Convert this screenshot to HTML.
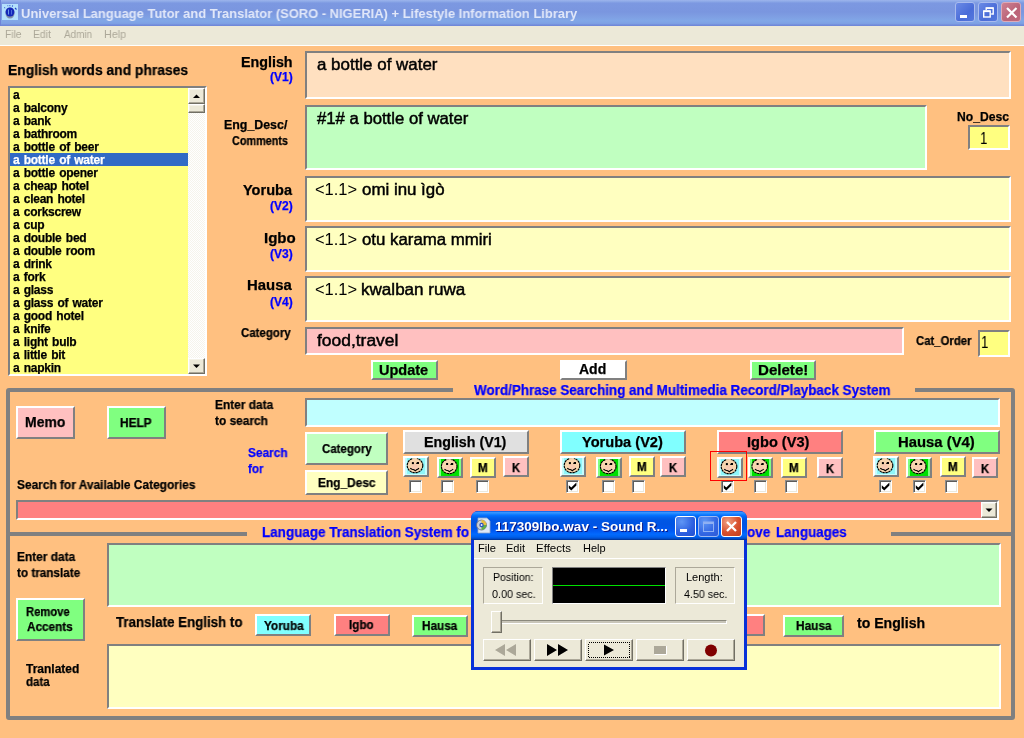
<!DOCTYPE html>
<html>
<head>
<meta charset="utf-8">
<title>Universal Language Tutor and Translator</title>
<style>html,body{margin:0;padding:0;}
body{width:1024px;height:738px;overflow:hidden;background:#FFC080;position:relative;font-family:"Liberation Sans",sans-serif;font-size:11px;color:#000;}
.abs{position:absolute;box-sizing:border-box;}
.tx{position:absolute;white-space:nowrap;font-weight:bold;transform-origin:0 0;will-change:transform;}
.sunk{position:absolute;box-sizing:border-box;border-top:2px solid #808080;border-left:2px solid #808080;border-bottom:2px solid #fff;border-right:2px solid #fff;overflow:hidden;}
.btn{position:absolute;box-sizing:border-box;border-top:2px solid #fff;border-left:2px solid #fff;border-bottom:2px solid #808080;border-right:2px solid #808080;overflow:hidden;}
#title{left:0;top:0;width:1024px;height:26px;background:linear-gradient(#9db4ec 0%,#8fabe8 5%,#7c98e1 12%,#7a96df 46%,#7f9fe3 65%,#81a7e7 80%,#7ea1e4 90%,#7590dc 95%,#6c84d6 100%);}
.tb{position:absolute;box-sizing:border-box;width:20px;height:20px;top:2px;border:1px solid #a9bbee;border-radius:3px;background:linear-gradient(135deg,#6a8ae6,#4a6cd8 60%,#5578dd);}
#menu{left:0;top:26px;width:1024px;height:20px;background:#ece9d8;border-bottom:1px solid #fff;}
#list{left:8px;top:86px;width:199px;height:290px;background:#FFFF80;}
#list .row{position:absolute;left:0;width:178px;height:13px;line-height:13px;font-size:12px;font-weight:bold;padding-left:3px;box-sizing:border-box;white-space:nowrap;letter-spacing:-0.25px;word-spacing:1.2px;}
#list .row span{position:relative;top:1px;will-change:transform;-webkit-text-stroke-width:0.25px;}
#list .sel{background:#316AC5;color:#fff;}
#sb{left:178px;top:0;width:17px;height:286px;background-color:#f6f4ec;background-image:linear-gradient(45deg,#fff 25%,transparent 25%,transparent 75%,#fff 75%),linear-gradient(45deg,#fff 25%,transparent 25%,transparent 75%,#fff 75%);background-size:2px 2px;background-position:0 0,1px 1px;}
.sbtn{position:absolute;box-sizing:border-box;left:0;width:17px;background:#ece9d8;border-top:1px solid #fff;border-left:1px solid #fff;border-bottom:1px solid #716f64;border-right:1px solid #716f64;box-shadow:inset -1px -1px 0 #aca899, inset 1px 1px 0 #f4f2e8;}
.frame{position:absolute;box-sizing:border-box;border:4px solid #808080;border-radius:3px;}
.cb{position:absolute;box-sizing:border-box;width:13px;height:13px;background:#fff;border-top:1px solid #8c8c8c;border-left:1px solid #8c8c8c;border-bottom:1px solid #fff;border-right:1px solid #fff;box-shadow:inset 1px 1px 0 #5c5c5c, inset -1px -1px 0 #ebe8dc;}
.cb svg{position:absolute;left:-1px;top:-1px;}
#sr{left:471px;top:511px;width:276px;height:159px;background:#0831d9;border-radius:7px 7px 0 0;overflow:hidden;}
#srt{left:0;top:0;width:276px;height:29px;border-radius:7px 7px 0 0;background:linear-gradient(#0058e6 0%,#3a93ff 5%,#288eff 8%,#127dff 12%,#036ffc 16%,#0262ee 22%,#0057e5 30%,#0054e3 45%,#0055eb 60%,#005bf5 70%,#026afe 80%,#0062ef 88%,#0052d6 94%,#0040ab 97%,#003092 100%);}
#srb{left:3px;top:29px;width:270px;height:127px;background:#ece9d8;}
.sb2{position:absolute;box-sizing:border-box;width:21px;height:21px;top:5px;border:1px solid #fff;border-radius:3px;}
.pan{position:absolute;box-sizing:border-box;border-top:1px solid #aca899;border-left:1px solid #aca899;border-bottom:1px solid #fff;border-right:1px solid #fff;}
.rb{position:absolute;box-sizing:border-box;top:99px;width:48px;height:22px;background:#ece9d8;border-top:1px solid #fff;border-left:1px solid #fff;border-bottom:1px solid #716f64;border-right:1px solid #716f64;box-shadow:inset -1px -1px 0 #aca899;}
.rb svg{position:absolute;left:0;top:0;}
</style>
</head>
<body>
<div id="title" class="abs"></div><div class="abs" style="left:0;top:0;width:1px;height:26px;background:#6e84d8"></div>
<svg class="abs" style="left:2px;top:4px" width="16" height="16" viewBox="0 0 16 16"><rect width="16" height="16" fill="#b4e0fc"/><ellipse cx="8" cy="9" rx="4.6" ry="5.6" fill="#7f8fa8"/><ellipse cx="8" cy="8" rx="4.4" ry="4.6" fill="#1428b8"/><rect x="6" y="5.5" width="1" height="5" fill="#6f9be8"/><rect x="9" y="6" width="1" height="4.5" fill="#4a6ad8"/><path d="M2.5 4 L3 3.5 M5.5 1.8 L6.2 1.8 M7.5 1.6 L8.3 1.6 M10 1.8 L11 2.2 M13 4 L14.5 5.5" stroke="#1c3fc8" stroke-width="1.1"/></svg>
<div class="tx" style="left:21.01px;top:5.50px;font-size:13px;line-height:16px;color:#e2e8f9;transform:scaleX(0.9946);">Universal Language Tutor and Translator (SORO - NIGERIA) + Lifestyle Information Library</div>
<div class="tb" style="left:955px"><svg width="18" height="18" viewBox="0 0 18 18"><rect x="4" y="12" width="7" height="3" fill="#fff"/></svg></div>
<div class="tb" style="left:978px"><svg width="18" height="18" viewBox="-0.7 -0.5 18 18"><path d="M6.5 6.5V4.5H13.5V10.5H11.5" fill="none" stroke="#fff" stroke-width="1.4"/><rect x="4" y="7.5" width="6.5" height="6" fill="none" stroke="#fff" stroke-width="1.4"/><rect x="4" y="7" width="6.5" height="1.6" fill="#fff"/><rect x="6.5" y="4" width="7" height="1.4" fill="#fff"/></svg></div>
<div class="tb" style="left:1001px;background:linear-gradient(135deg,#cd8293,#bb6378 60%,#c06a7e);border-color:#dcaab8"><svg width="18" height="18" viewBox="0 0 18 18"><path d="M5 5L14.5 14.5M14.5 5L5 14.5" stroke="#fff" stroke-width="2.2"/></svg></div>
<div id="menu" class="abs"></div>
<div class="tx" style="left:5.06px;top:27.69px;font-size:11px;line-height:13px;font-weight:normal;color:#aca899;transform:scaleX(0.9375);">File</div>
<div class="tx" style="left:32.56px;top:27.69px;font-size:11px;line-height:13px;font-weight:normal;color:#aca899;transform:scaleX(0.9444);">Edit</div>
<div class="tx" style="left:64.00px;top:27.69px;font-size:11px;line-height:13px;font-weight:normal;color:#aca899;transform:scaleX(0.9032);">Admin</div>
<div class="tx" style="left:103.52px;top:27.69px;font-size:11px;line-height:13px;font-weight:normal;color:#aca899;transform:scaleX(0.9762);">Help</div>
<div class="tx" style="left:8.01px;top:62.65px;font-size:14px;line-height:15px;-webkit-text-stroke-width:0.25px;transform:scaleX(0.9890);">English words and phrases</div>
<div id="list" class="sunk">
<div class="row" style="top:0px"><span>a</span></div>
<div class="row" style="top:13px"><span>a balcony</span></div>
<div class="row" style="top:26px"><span>a bank</span></div>
<div class="row" style="top:39px"><span>a bathroom</span></div>
<div class="row" style="top:52px"><span>a bottle of beer</span></div>
<div class="row sel" style="top:65px"><span>a bottle of water</span></div>
<div class="row" style="top:78px"><span>a bottle opener</span></div>
<div class="row" style="top:91px"><span>a cheap hotel</span></div>
<div class="row" style="top:104px"><span>a clean hotel</span></div>
<div class="row" style="top:117px"><span>a corkscrew</span></div>
<div class="row" style="top:130px"><span>a cup</span></div>
<div class="row" style="top:143px"><span>a double bed</span></div>
<div class="row" style="top:156px"><span>a double room</span></div>
<div class="row" style="top:169px"><span>a drink</span></div>
<div class="row" style="top:182px"><span>a fork</span></div>
<div class="row" style="top:195px"><span>a glass</span></div>
<div class="row" style="top:208px"><span>a glass of water</span></div>
<div class="row" style="top:221px"><span>a good hotel</span></div>
<div class="row" style="top:234px"><span>a knife</span></div>
<div class="row" style="top:247px"><span>a light bulb</span></div>
<div class="row" style="top:260px"><span>a little bit</span></div>
<div class="row" style="top:273px"><span>a napkin</span></div>
<div id="sb" class="abs"><div class="sbtn" style="top:0;height:16px"><svg width="15" height="14" viewBox="0 0 15 14" style="position:absolute;left:0;top:0"><path d="M4 9 L7.5 5.5 L11 9 Z" fill="#000"/></svg></div><div class="sbtn" style="top:16px;height:9px"></div><div class="sbtn" style="top:270px;height:16px"><svg width="15" height="14" viewBox="0 0 15 14" style="position:absolute;left:0;top:0"><path d="M4 5.5 L11 5.5 L7.5 9 Z" fill="#000"/></svg></div></div>
</div>
<div class="tx" style="left:241.48px;top:54.65px;font-size:14px;line-height:15px;-webkit-text-stroke-width:0.25px;transform:scaleX(1.0204);">English</div>
<div class="tx" style="left:270.00px;top:71.34px;font-size:12px;line-height:13px;-webkit-text-stroke-width:0.25px;color:#0000FF;transform:scaleX(1.0000);">(V1)</div>
<div class="tx" style="left:224.00px;top:119.34px;font-size:12px;line-height:13px;-webkit-text-stroke-width:0.25px;transform:scaleX(1.0323);">Eng_Desc/</div>
<div class="tx" style="left:232.00px;top:134.84px;font-size:12px;line-height:13px;-webkit-text-stroke-width:0.25px;transform:scaleX(0.9032);">Comments</div>
<div class="tx" style="left:243.20px;top:182.65px;font-size:14px;line-height:15px;-webkit-text-stroke-width:0.25px;transform:scaleX(1.0375);">Yoruba</div>
<div class="tx" style="left:270.00px;top:199.94px;font-size:12px;line-height:13px;-webkit-text-stroke-width:0.25px;color:#0000FF;transform:scaleX(1.0000);">(V2)</div>
<div class="tx" style="left:264.23px;top:230.65px;font-size:14px;line-height:15px;-webkit-text-stroke-width:0.25px;transform:scaleX(1.0750);">Igbo</div>
<div class="tx" style="left:270.00px;top:247.64px;font-size:12px;line-height:13px;-webkit-text-stroke-width:0.25px;color:#0000FF;transform:scaleX(1.0000);">(V3)</div>
<div class="tx" style="left:247.24px;top:278.05px;font-size:14px;line-height:15px;-webkit-text-stroke-width:0.25px;transform:scaleX(1.0643);">Hausa</div>
<div class="tx" style="left:270.00px;top:295.94px;font-size:12px;line-height:13px;-webkit-text-stroke-width:0.25px;color:#0000FF;transform:scaleX(1.0000);">(V4)</div>
<div class="tx" style="left:240.90px;top:327.34px;font-size:12px;line-height:13px;-webkit-text-stroke-width:0.25px;transform:scaleX(0.9558);">Category</div>
<div class="tx" style="left:956.70px;top:110.94px;font-size:12px;line-height:13px;-webkit-text-stroke-width:0.25px;transform:scaleX(1.0118);">No_Desc</div>
<div class="tx" style="left:915.75px;top:334.74px;font-size:12px;line-height:13px;-webkit-text-stroke-width:0.25px;transform:scaleX(0.9466);">Cat_Order</div>
<div class="sunk" style="left:305px;top:51px;width:706px;height:48px;background:#FFE0C0;"></div>
<div class="sunk" style="left:305px;top:105px;width:622px;height:65px;background:#C0FFC0;"></div>
<div class="sunk" style="left:968px;top:125px;width:42px;height:25px;background:#FFFF80;"></div>
<div class="sunk" style="left:305px;top:176px;width:706px;height:46px;background:#FFFFC0;"></div>
<div class="sunk" style="left:305px;top:226px;width:706px;height:46px;background:#FFFFC0;"></div>
<div class="sunk" style="left:305px;top:276px;width:706px;height:46px;background:#FFFFC0;"></div>
<div class="sunk" style="left:305px;top:327px;width:599px;height:28px;background:#FFC0C0;"></div>
<div class="sunk" style="left:978px;top:330px;width:32px;height:27px;background:#FFFF80;"></div>
<div class="tx" style="left:317.20px;top:55.96px;font-size:16px;line-height:18px;font-weight:normal;transform:scaleX(1.0579);-webkit-text-stroke:0.45px #000;">a bottle of water</div>
<div class="tx" style="left:317.20px;top:109.96px;font-size:16px;line-height:18px;font-weight:normal;transform:scaleX(1.0434);-webkit-text-stroke:0.45px #000;">#1# a bottle of water</div>
<div class="tx" style="left:980.37px;top:130.16px;font-size:16px;line-height:18px;font-weight:normal;transform:scaleX(0.8286);">1</div>
<div class="tx" style="left:315.17px;top:181.16px;font-size:16px;line-height:18px;font-weight:normal;transform:scaleX(1.0282);">&lt;1.1&gt;</div>
<div class="tx" style="left:362.00px;top:181.16px;font-size:16px;line-height:18px;font-weight:normal;transform:scaleX(1.0551);-webkit-text-stroke:0.45px #000;">omi inu &igrave;g&ograve;</div>
<div class="tx" style="left:315.17px;top:231.06px;font-size:16px;line-height:18px;font-weight:normal;transform:scaleX(1.0282);">&lt;1.1&gt;</div>
<div class="tx" style="left:362.00px;top:231.06px;font-size:16px;line-height:18px;font-weight:normal;transform:scaleX(1.0504);-webkit-text-stroke:0.45px #000;">otu karama mmiri</div>
<div class="tx" style="left:315.17px;top:280.96px;font-size:16px;line-height:18px;font-weight:normal;transform:scaleX(1.0282);">&lt;1.1&gt;</div>
<div class="tx" style="left:360.93px;top:280.96px;font-size:16px;line-height:18px;font-weight:normal;transform:scaleX(1.0663);-webkit-text-stroke:0.45px #000;">kwalban ruwa</div>
<div class="tx" style="left:316.80px;top:331.76px;font-size:16px;line-height:18px;font-weight:normal;transform:scaleX(1.0892);-webkit-text-stroke:0.45px #000;">food,travel</div>
<div class="tx" style="left:981.37px;top:333.76px;font-size:16px;line-height:18px;font-weight:normal;transform:scaleX(0.8286);">1</div>
<div class="btn" style="left:371px;top:360px;width:67px;height:20px;background:#80FF80;"></div>
<div class="tx" style="left:378.90px;top:362.65px;font-size:14px;line-height:15px;-webkit-text-stroke-width:0.25px;transform:scaleX(1.0354);">Update</div>
<div class="btn" style="left:560px;top:360px;width:67px;height:20px;background:#FFFFFF;"></div>
<div class="tx" style="left:579.00px;top:362.15px;font-size:14px;line-height:15px;-webkit-text-stroke-width:0.25px;transform:scaleX(1.0000);">Add</div>
<div class="btn" style="left:750px;top:360px;width:66px;height:20px;background:#80FF80;"></div>
<div class="tx" style="left:758.42px;top:362.65px;font-size:14px;line-height:15px;-webkit-text-stroke-width:0.25px;transform:scaleX(1.0778);">Delete!</div>
<div class="frame" style="left:6px;top:388px;width:1009px;height:148px;"></div>
<div class="frame" style="left:6px;top:532px;width:1009px;height:188px;"></div>
<div class="abs" style="left:453px;top:386px;width:462px;height:8px;background:#FFC080"></div>
<div class="tx" style="left:473.50px;top:382.65px;font-size:14px;line-height:15px;-webkit-text-stroke-width:0.25px;color:#0000FF;transform:scaleX(0.9597);">Word/Phrase Searching and Multimedia Record/Playback System</div>
<div class="abs" style="left:247px;top:530px;width:644px;height:8px;background:#FFC080"></div>
<div class="tx" style="left:262.44px;top:524.85px;font-size:14px;line-height:15px;-webkit-text-stroke-width:0.25px;color:#0000FF;transform:scaleX(0.9607);">Language Translation System fo</div>
<div class="tx" style="left:739.05px;top:524.85px;font-size:14px;line-height:15px;-webkit-text-stroke-width:0.25px;color:#0000FF;transform:scaleX(0.9531);">bove</div>
<div class="tx" style="left:775.74px;top:524.85px;font-size:14px;line-height:15px;-webkit-text-stroke-width:0.25px;color:#0000FF;transform:scaleX(0.9575);">Languages</div>
<div class="btn" style="left:16px;top:406px;width:59px;height:33px;background:#FFC0C0;"></div>
<div class="tx" style="left:24.61px;top:414.65px;font-size:14px;line-height:15px;-webkit-text-stroke-width:0.25px;transform:scaleX(0.9949);">Memo</div>
<div class="btn" style="left:107px;top:406px;width:59px;height:33px;background:#80FF80;"></div>
<div class="tx" style="left:120.00px;top:416.84px;font-size:12px;line-height:13px;-webkit-text-stroke-width:0.25px;transform:scaleX(0.9844);">HELP</div>
<div class="tx" style="left:214.50px;top:399.34px;font-size:12px;line-height:13px;-webkit-text-stroke-width:0.25px;transform:scaleX(0.9915);">Enter data</div>
<div class="tx" style="left:214.50px;top:415.09px;font-size:12px;line-height:13px;-webkit-text-stroke-width:0.25px;transform:scaleX(0.9906);">to search</div>
<div class="sunk" style="left:305px;top:398px;width:695px;height:29px;background:#C0FFFF;"></div>
<div class="tx" style="left:247.50px;top:446.84px;font-size:12px;line-height:13px;-webkit-text-stroke-width:0.25px;color:#0000FF;transform:scaleX(0.9875);">Search</div>
<div class="tx" style="left:247.50px;top:463.09px;font-size:12px;line-height:13px;-webkit-text-stroke-width:0.25px;color:#0000FF;transform:scaleX(0.9688);">for</div>
<div class="btn" style="left:305px;top:432px;width:83px;height:33px;background:#C0FFC0;"></div>
<div class="tx" style="left:321.75px;top:443.09px;font-size:12px;line-height:13px;-webkit-text-stroke-width:0.25px;transform:scaleX(0.9567);">Category</div>
<div class="btn" style="left:305px;top:470px;width:83px;height:25px;background:#FFFFC0;"></div>
<div class="tx" style="left:317.50px;top:476.84px;font-size:12px;line-height:13px;-webkit-text-stroke-width:0.25px;transform:scaleX(0.9914);">Eng_Desc</div>
<div class="tx" style="left:16.50px;top:479.09px;font-size:12px;line-height:13px;-webkit-text-stroke-width:0.25px;transform:scaleX(0.9917);">Search for Available Categories</div>
<div class="sunk" style="left:16px;top:500px;width:983px;height:20px;background:#FF8080;"><div class="sbtn" style="left:963px;top:0;width:16px;height:16px"><svg width="14" height="14" viewBox="0 0 14 14" style="position:absolute;left:0;top:0"><path d="M3.5 5.5 L10.5 5.5 L7 9 Z" fill="#000"/></svg></div></div>
<div class="btn" style="left:403px;top:430px;width:126px;height:24px;background:#E0E0E0;"></div>
<div class="tx" style="left:423.58px;top:434.65px;font-size:14px;line-height:15px;-webkit-text-stroke-width:0.25px;transform:scaleX(1.0175);">English (V1)</div>
<div class="btn" style="left:403px;top:456px;width:26px;height:21px;background:#c6fdfd;"><svg width="22" height="17" style="position:absolute;left:0;top:0"><rect x="2" y="0" width="18" height="16" fill="#8ef6fa"/><g transform="translate(10.0,7.5)"><ellipse cx="0" cy="0" rx="7.8" ry="7.3" fill="#f8d6ae" stroke="#000" stroke-width="1.15" stroke-dasharray="2.4 0.6"/><rect x="-2.6" y="-8.2" width="5" height="1.6" fill="#f6e0c0"/><ellipse cx="0" cy="1.5" rx="3.6" ry="3" fill="#f8c4b4" opacity="0.6"/><rect x="-3.1" y="-3.4" width="2" height="2" fill="#000"/><path d="M1 -1.5 L2 -3.4 L4 -3.4 L4 -1.5 Z" fill="#000"/><path d="M-4.8 2.7 L-3 3.8 L-1 4.3 L0.3 5.3 L1.5 4.3 L3 3.5 L4 2.7" fill="none" stroke="#000" stroke-width="1.1"/></g></svg></div>
<div class="btn" style="left:437px;top:457px;width:26px;height:21px;background:#80FF80;"><svg width="22" height="17" style="position:absolute;left:0;top:0"><rect x="2" y="0" width="18" height="17" fill="#00E000"/><g transform="translate(10.2,7.4)"><ellipse cx="0" cy="0" rx="7.8" ry="7.3" fill="#f8d6ae" stroke="#000" stroke-width="1.15" stroke-dasharray="2.4 0.6"/><rect x="-2.6" y="-8.2" width="5" height="1.6" fill="#f6e0c0"/><ellipse cx="0" cy="1.5" rx="3.6" ry="3" fill="#f8c4b4" opacity="0.6"/><rect x="-3.1" y="-3.4" width="2" height="2" fill="#000"/><path d="M1 -1.5 L2 -3.4 L4 -3.4 L4 -1.5 Z" fill="#000"/><path d="M-4.8 2.7 L-3 3.8 L-1 4.3 L0.3 5.3 L1.5 4.3 L3 3.5 L4 2.7" fill="none" stroke="#000" stroke-width="1.1"/></g></svg></div>
<div class="btn" style="left:470px;top:457px;width:26px;height:21px;background:#FFFF80;"></div>
<div class="tx" style="left:478.00px;top:461.64px;font-size:12px;line-height:13px;-webkit-text-stroke-width:0.25px;transform:scaleX(0.9600);">M</div>
<div class="btn" style="left:503px;top:456px;width:26px;height:21px;background:#FFC0C0;"></div>
<div class="tx" style="left:512.00px;top:461.64px;font-size:12px;line-height:13px;-webkit-text-stroke-width:0.25px;transform:scaleX(0.9333);">K</div>
<div class="cb" style="left:409px;top:480px"></div>
<div class="cb" style="left:441px;top:480px"></div>
<div class="cb" style="left:476px;top:480px"></div>
<div class="btn" style="left:560px;top:430px;width:126px;height:24px;background:#80FFFF;"></div>
<div class="tx" style="left:581.70px;top:434.65px;font-size:14px;line-height:15px;-webkit-text-stroke-width:0.25px;transform:scaleX(1.0429);">Yoruba (V2)</div>
<div class="btn" style="left:560px;top:456px;width:26px;height:21px;background:#c6fdfd;"><svg width="22" height="17" style="position:absolute;left:0;top:0"><rect x="2" y="0" width="18" height="16" fill="#8ef6fa"/><g transform="translate(10.0,7.5)"><ellipse cx="0" cy="0" rx="7.8" ry="7.3" fill="#f8d6ae" stroke="#000" stroke-width="1.15" stroke-dasharray="2.4 0.6"/><rect x="-2.6" y="-8.2" width="5" height="1.6" fill="#f6e0c0"/><ellipse cx="0" cy="1.5" rx="3.6" ry="3" fill="#f8c4b4" opacity="0.6"/><rect x="-3.1" y="-3.4" width="2" height="2" fill="#000"/><path d="M1 -1.5 L2 -3.4 L4 -3.4 L4 -1.5 Z" fill="#000"/><path d="M-4.8 2.7 L-3 3.8 L-1 4.3 L0.3 5.3 L1.5 4.3 L3 3.5 L4 2.7" fill="none" stroke="#000" stroke-width="1.1"/></g></svg></div>
<div class="btn" style="left:596px;top:457px;width:26px;height:21px;background:#80FF80;"><svg width="22" height="17" style="position:absolute;left:0;top:0"><rect x="2" y="0" width="18" height="17" fill="#00E000"/><g transform="translate(10.2,7.4)"><ellipse cx="0" cy="0" rx="7.8" ry="7.3" fill="#f8d6ae" stroke="#000" stroke-width="1.15" stroke-dasharray="2.4 0.6"/><rect x="-2.6" y="-8.2" width="5" height="1.6" fill="#f6e0c0"/><ellipse cx="0" cy="1.5" rx="3.6" ry="3" fill="#f8c4b4" opacity="0.6"/><rect x="-3.1" y="-3.4" width="2" height="2" fill="#000"/><path d="M1 -1.5 L2 -3.4 L4 -3.4 L4 -1.5 Z" fill="#000"/><path d="M-4.8 2.7 L-3 3.8 L-1 4.3 L0.3 5.3 L1.5 4.3 L3 3.5 L4 2.7" fill="none" stroke="#000" stroke-width="1.1"/></g></svg></div>
<div class="btn" style="left:629px;top:456px;width:26px;height:21px;background:#FFFF80;"></div>
<div class="tx" style="left:637.00px;top:460.64px;font-size:12px;line-height:13px;-webkit-text-stroke-width:0.25px;transform:scaleX(0.9600);">M</div>
<div class="btn" style="left:660px;top:456px;width:26px;height:21px;background:#FFC0C0;"></div>
<div class="tx" style="left:669.00px;top:461.64px;font-size:12px;line-height:13px;-webkit-text-stroke-width:0.25px;transform:scaleX(0.9333);">K</div>
<div class="cb" style="left:566px;top:480px"><svg width="13" height="13" viewBox="0 0 13 13"><path d="M2.8 5.2 L5.3 7.6 L10.4 2.6 L10.4 5.6 L5.3 10.5 L2.8 8.2 Z" fill="#000"/></svg></div>
<div class="cb" style="left:602px;top:480px"></div>
<div class="cb" style="left:632px;top:480px"></div>
<div class="btn" style="left:717px;top:430px;width:126px;height:24px;background:#FF8080;"></div>
<div class="tx" style="left:747.46px;top:434.65px;font-size:14px;line-height:15px;-webkit-text-stroke-width:0.25px;transform:scaleX(1.0424);">Igbo (V3)</div>
<div class="btn" style="left:717px;top:457px;width:26px;height:21px;background:#c6fdfd;"><svg width="22" height="17" style="position:absolute;left:0;top:0"><rect x="2" y="0" width="18" height="16" fill="#8ef6fa"/><g transform="translate(10.0,7.5)"><ellipse cx="0" cy="0" rx="7.8" ry="7.3" fill="#f8d6ae" stroke="#000" stroke-width="1.15" stroke-dasharray="2.4 0.6"/><rect x="-2.6" y="-8.2" width="5" height="1.6" fill="#f6e0c0"/><ellipse cx="0" cy="1.5" rx="3.6" ry="3" fill="#f8c4b4" opacity="0.6"/><rect x="-3.1" y="-3.4" width="2" height="2" fill="#000"/><path d="M1 -1.5 L2 -3.4 L4 -3.4 L4 -1.5 Z" fill="#000"/><path d="M-4.8 2.7 L-3 3.8 L-1 4.3 L0.3 5.3 L1.5 4.3 L3 3.5 L4 2.7" fill="none" stroke="#000" stroke-width="1.1"/></g></svg></div>
<div class="btn" style="left:748px;top:457px;width:25px;height:21px;background:#80FF80;"><svg width="21" height="17" style="position:absolute;left:0;top:0"><rect x="2" y="0" width="17" height="17" fill="#00E000"/><g transform="translate(9.7,7.4)"><ellipse cx="0" cy="0" rx="7.8" ry="7.3" fill="#f8d6ae" stroke="#000" stroke-width="1.15" stroke-dasharray="2.4 0.6"/><rect x="-2.6" y="-8.2" width="5" height="1.6" fill="#f6e0c0"/><ellipse cx="0" cy="1.5" rx="3.6" ry="3" fill="#f8c4b4" opacity="0.6"/><rect x="-3.1" y="-3.4" width="2" height="2" fill="#000"/><path d="M1 -1.5 L2 -3.4 L4 -3.4 L4 -1.5 Z" fill="#000"/><path d="M-4.8 2.7 L-3 3.8 L-1 4.3 L0.3 5.3 L1.5 4.3 L3 3.5 L4 2.7" fill="none" stroke="#000" stroke-width="1.1"/></g></svg></div>
<div class="btn" style="left:781px;top:457px;width:26px;height:21px;background:#FFFF80;"></div>
<div class="tx" style="left:789.00px;top:461.64px;font-size:12px;line-height:13px;-webkit-text-stroke-width:0.25px;transform:scaleX(0.9600);">M</div>
<div class="btn" style="left:817px;top:457px;width:26px;height:21px;background:#FFC0C0;"></div>
<div class="tx" style="left:826.00px;top:462.64px;font-size:12px;line-height:13px;-webkit-text-stroke-width:0.25px;transform:scaleX(0.9333);">K</div>
<div class="cb" style="left:721px;top:480px"><svg width="13" height="13" viewBox="0 0 13 13"><path d="M2.8 5.2 L5.3 7.6 L10.4 2.6 L10.4 5.6 L5.3 10.5 L2.8 8.2 Z" fill="#000"/></svg></div>
<div class="cb" style="left:754px;top:480px"></div>
<div class="cb" style="left:785px;top:480px"></div>
<div class="btn" style="left:874px;top:430px;width:126px;height:24px;background:#80FF80;"></div>
<div class="tx" style="left:897.64px;top:434.65px;font-size:14px;line-height:15px;-webkit-text-stroke-width:0.25px;transform:scaleX(1.0606);">Hausa (V4)</div>
<div class="btn" style="left:873px;top:456px;width:26px;height:21px;background:#c6fdfd;"><svg width="22" height="17" style="position:absolute;left:0;top:0"><rect x="2" y="0" width="18" height="16" fill="#8ef6fa"/><g transform="translate(10.0,7.5)"><ellipse cx="0" cy="0" rx="7.8" ry="7.3" fill="#f8d6ae" stroke="#000" stroke-width="1.15" stroke-dasharray="2.4 0.6"/><rect x="-2.6" y="-8.2" width="5" height="1.6" fill="#f6e0c0"/><ellipse cx="0" cy="1.5" rx="3.6" ry="3" fill="#f8c4b4" opacity="0.6"/><rect x="-3.1" y="-3.4" width="2" height="2" fill="#000"/><path d="M1 -1.5 L2 -3.4 L4 -3.4 L4 -1.5 Z" fill="#000"/><path d="M-4.8 2.7 L-3 3.8 L-1 4.3 L0.3 5.3 L1.5 4.3 L3 3.5 L4 2.7" fill="none" stroke="#000" stroke-width="1.1"/></g></svg></div>
<div class="btn" style="left:906px;top:457px;width:26px;height:21px;background:#80FF80;"><svg width="22" height="17" style="position:absolute;left:0;top:0"><rect x="2" y="0" width="18" height="17" fill="#00E000"/><g transform="translate(10.2,7.4)"><ellipse cx="0" cy="0" rx="7.8" ry="7.3" fill="#f8d6ae" stroke="#000" stroke-width="1.15" stroke-dasharray="2.4 0.6"/><rect x="-2.6" y="-8.2" width="5" height="1.6" fill="#f6e0c0"/><ellipse cx="0" cy="1.5" rx="3.6" ry="3" fill="#f8c4b4" opacity="0.6"/><rect x="-3.1" y="-3.4" width="2" height="2" fill="#000"/><path d="M1 -1.5 L2 -3.4 L4 -3.4 L4 -1.5 Z" fill="#000"/><path d="M-4.8 2.7 L-3 3.8 L-1 4.3 L0.3 5.3 L1.5 4.3 L3 3.5 L4 2.7" fill="none" stroke="#000" stroke-width="1.1"/></g></svg></div>
<div class="btn" style="left:940px;top:456px;width:26px;height:21px;background:#FFFF80;"></div>
<div class="tx" style="left:948.00px;top:460.64px;font-size:12px;line-height:13px;-webkit-text-stroke-width:0.25px;transform:scaleX(0.9600);">M</div>
<div class="btn" style="left:972px;top:457px;width:26px;height:21px;background:#FFC0C0;"></div>
<div class="tx" style="left:981.00px;top:462.64px;font-size:12px;line-height:13px;-webkit-text-stroke-width:0.25px;transform:scaleX(0.9333);">K</div>
<div class="cb" style="left:879px;top:480px"><svg width="13" height="13" viewBox="0 0 13 13"><path d="M2.8 5.2 L5.3 7.6 L10.4 2.6 L10.4 5.6 L5.3 10.5 L2.8 8.2 Z" fill="#000"/></svg></div>
<div class="cb" style="left:913px;top:480px"><svg width="13" height="13" viewBox="0 0 13 13"><path d="M2.8 5.2 L5.3 7.6 L10.4 2.6 L10.4 5.6 L5.3 10.5 L2.8 8.2 Z" fill="#000"/></svg></div>
<div class="cb" style="left:945px;top:480px"></div>
<div class="abs" style="left:710px;top:451px;width:37px;height:30px;border:1px solid #FF0000"></div>
<div class="tx" style="left:16.50px;top:551.34px;font-size:12px;line-height:13px;-webkit-text-stroke-width:0.25px;transform:scaleX(0.9915);">Enter data</div>
<div class="tx" style="left:16.50px;top:567.09px;font-size:12px;line-height:13px;-webkit-text-stroke-width:0.25px;transform:scaleX(0.9769);">to translate</div>
<div class="sunk" style="left:107px;top:543px;width:894px;height:64px;background:#C0FFC0;"></div>
<div class="btn" style="left:16px;top:598px;width:69px;height:43px;background:#80FF80;"></div>
<div class="tx" style="left:26.00px;top:606.09px;font-size:12px;line-height:13px;-webkit-text-stroke-width:0.25px;transform:scaleX(0.9362);">Remove</div>
<div class="tx" style="left:27.00px;top:620.84px;font-size:12px;line-height:13px;-webkit-text-stroke-width:0.25px;transform:scaleX(0.9787);">Accents</div>
<div class="tx" style="left:115.50px;top:614.65px;font-size:14px;line-height:15px;-webkit-text-stroke-width:0.25px;transform:scaleX(0.9511);">Translate English to</div>
<div class="btn" style="left:255px;top:614px;width:56px;height:22px;background:#80FFFF;"></div>
<div class="tx" style="left:264.25px;top:619.84px;font-size:12px;line-height:13px;-webkit-text-stroke-width:0.25px;transform:scaleX(0.9817);">Yoruba</div>
<div class="btn" style="left:334px;top:614px;width:56px;height:22px;background:#FF8080;"></div>
<div class="tx" style="left:348.75px;top:619.09px;font-size:12px;line-height:13px;-webkit-text-stroke-width:0.25px;transform:scaleX(0.9700);">Igbo</div>
<div class="btn" style="left:412px;top:615px;width:56px;height:22px;background:#80FF80;"></div>
<div class="tx" style="left:421.75px;top:619.84px;font-size:12px;line-height:13px;-webkit-text-stroke-width:0.25px;transform:scaleX(0.9792);">Hausa</div>
<div class="btn" style="left:709px;top:614px;width:56px;height:22px;background:#FF8080;"></div>
<div class="btn" style="left:783px;top:615px;width:61px;height:22px;background:#80FF80;"></div>
<div class="tx" style="left:795.50px;top:620.14px;font-size:12px;line-height:13px;-webkit-text-stroke-width:0.25px;transform:scaleX(0.9861);">Hausa</div>
<div class="tx" style="left:857.00px;top:616.05px;font-size:14px;line-height:15px;-webkit-text-stroke-width:0.25px;transform:scaleX(1.0060);">to English</div>
<div class="tx" style="left:26.00px;top:662.84px;font-size:12px;line-height:13px;-webkit-text-stroke-width:0.25px;transform:scaleX(1.0000);">Tranlated</div>
<div class="tx" style="left:26.00px;top:676.09px;font-size:12px;line-height:13px;-webkit-text-stroke-width:0.25px;transform:scaleX(0.9600);">data</div>
<div class="sunk" style="left:107px;top:644px;width:894px;height:65px;background:#FFFFC0;"></div>
<div id="sr" class="abs"><div id="srt" class="abs">
<svg class="abs" style="left:4px;top:6px" width="17" height="17" viewBox="0 0 17 17"><path d="M3 1 H12 L15 4 V16 H3 Z" fill="#dfe8f7" stroke="#8fa4c8" stroke-width="0.8"/><circle cx="6.5" cy="8" r="5" fill="#c8d0d8" stroke="#667" stroke-width="0.8"/><path d="M6.5 3 A5 5 0 0 1 11.5 8 L6.5 8 Z" fill="#e8c040"/><path d="M11.5 8 A5 5 0 0 1 6.5 13 L6.5 8 Z" fill="#5fae4a"/><circle cx="6.5" cy="8" r="2.2" fill="#2a50c0"/><path d="M5.8 6.8 L8 8 L5.8 9.2 Z" fill="#fff"/></svg>
<div class="sb2" style="left:204px;background:radial-gradient(circle at 30% 25%,#5f96f5,#2c5fe0 60%,#2350cf)"><svg width="19" height="19" viewBox="0 0 19 19"><rect x="4" y="12" width="7" height="3" fill="#fff"/></svg></div>
<div class="sb2" style="left:227px;border-color:#9db9f2;background:radial-gradient(circle at 30% 25%,#5f96f5,#3366e3 60%,#2d5ad6)"><svg width="19" height="19" viewBox="0 0 19 19"><rect x="4.5" y="5.5" width="10" height="9" fill="none" stroke="#8fb0f3" stroke-width="1"/><rect x="4" y="4.5" width="11" height="2.5" fill="#8fb0f3"/></svg></div>
<div class="sb2" style="left:250px;background:radial-gradient(circle at 30% 25%,#f0a082,#d8502e 55%,#c33d1c)"><svg width="19" height="19" viewBox="0 0 19 19"><path d="M5 5L14 14M14 5L5 14" stroke="#fff" stroke-width="2.3"/></svg></div>
</div>
<div id="srb" class="abs">
<div class="abs" style="left:0;top:0;width:270px;height:19px;border-bottom:1px solid #fff;"></div>
<div class="pan" style="left:9px;top:27px;width:60px;height:37px;"></div>
<div class="abs" style="left:78px;top:27px;width:114px;height:37px;background:#000;border-top:1px solid #808080;border-left:1px solid #808080;border-bottom:1px solid #fff;border-right:1px solid #fff;"><div class="abs" style="left:0;top:17px;width:112px;height:1px;background:#00e000"></div></div>
<div class="pan" style="left:201px;top:27px;width:60px;height:37px;"></div>
<div class="abs" style="left:24px;top:80px;width:229px;height:4px;background:#c8c5b8;border-top:1px solid #8a887c;border-left:1px solid #8a887c;border-bottom:1px solid #fff;border-right:1px solid #fff"></div>
<div class="abs" style="left:17px;top:71px;width:11px;height:22px;background:#ece9d8;border-top:1px solid #fff;border-left:1px solid #fff;border-bottom:1px solid #716f64;border-right:1px solid #716f64;box-shadow:inset -1px -1px 0 #aca899"></div>
<div class="rb" style="left:9px"><svg width="46" height="20" viewBox="0 0 46 20"><path d="M21 4 L11 10 L21 16 Z M32 4 L22 10 L32 16 Z" fill="#aca899"/></svg></div>
<div class="rb" style="left:60px"><svg width="46" height="20" viewBox="0 0 46 20"><path d="M12 4 L22 10 L12 16 Z M23 4 L33 10 L23 16 Z" fill="#000"/></svg></div>
<div class="rb" style="left:111px"><svg width="46" height="20" viewBox="0 0 46 20"><rect x="2.5" y="2.5" width="41" height="15" fill="none" stroke="#000" stroke-width="1" stroke-dasharray="1 1" shape-rendering="crispEdges"/><path d="M18 4.5 L28 10 L18 15.5 Z" fill="#000"/></svg></div>
<div class="rb" style="left:162px"><svg width="46" height="20" viewBox="0 0 46 20"><rect x="17" y="6" width="12" height="8" fill="#aca899"/><path d="M17.5 14.5 H29.5 V6" fill="none" stroke="#fff" stroke-width="1"/></svg></div>
<div class="rb" style="left:213px"><svg width="46" height="20" viewBox="0 0 46 20"><circle cx="23" cy="10.5" r="6" fill="#800000"/></svg></div>
</div></div>
<div class="tx" style="left:495.46px;top:519.25px;font-size:13px;line-height:16px;color:#fff;transform:scaleX(1.0394);text-shadow:1px 1px 0 #0a1883;">117309Ibo.wav - Sound R...</div>
<div class="tx" style="left:478.29px;top:542.19px;font-size:11px;line-height:13px;font-weight:normal;transform:scaleX(1.0125);">File</div>
<div class="tx" style="left:506.42px;top:542.19px;font-size:11px;line-height:13px;font-weight:normal;transform:scaleX(0.9778);">Edit</div>
<div class="tx" style="left:536.45px;top:542.19px;font-size:11px;line-height:13px;font-weight:normal;transform:scaleX(1.0469);">Effects</div>
<div class="tx" style="left:582.50px;top:542.19px;font-size:11px;line-height:13px;font-weight:normal;transform:scaleX(1.0000);">Help</div>
<div class="tx" style="left:492.54px;top:570.89px;font-size:11px;line-height:13px;font-weight:normal;transform:scaleX(0.9585);">Position:</div>
<div class="tx" style="left:491.50px;top:587.89px;font-size:11px;line-height:13px;font-weight:normal;transform:scaleX(0.9818);">0.00 sec.</div>
<div class="tx" style="left:686.30px;top:570.89px;font-size:11px;line-height:13px;font-weight:normal;transform:scaleX(1.0000);">Length:</div>
<div class="tx" style="left:683.80px;top:587.89px;font-size:11px;line-height:13px;font-weight:normal;transform:scaleX(0.9727);">4.50 sec.</div>
</body>
</html>
